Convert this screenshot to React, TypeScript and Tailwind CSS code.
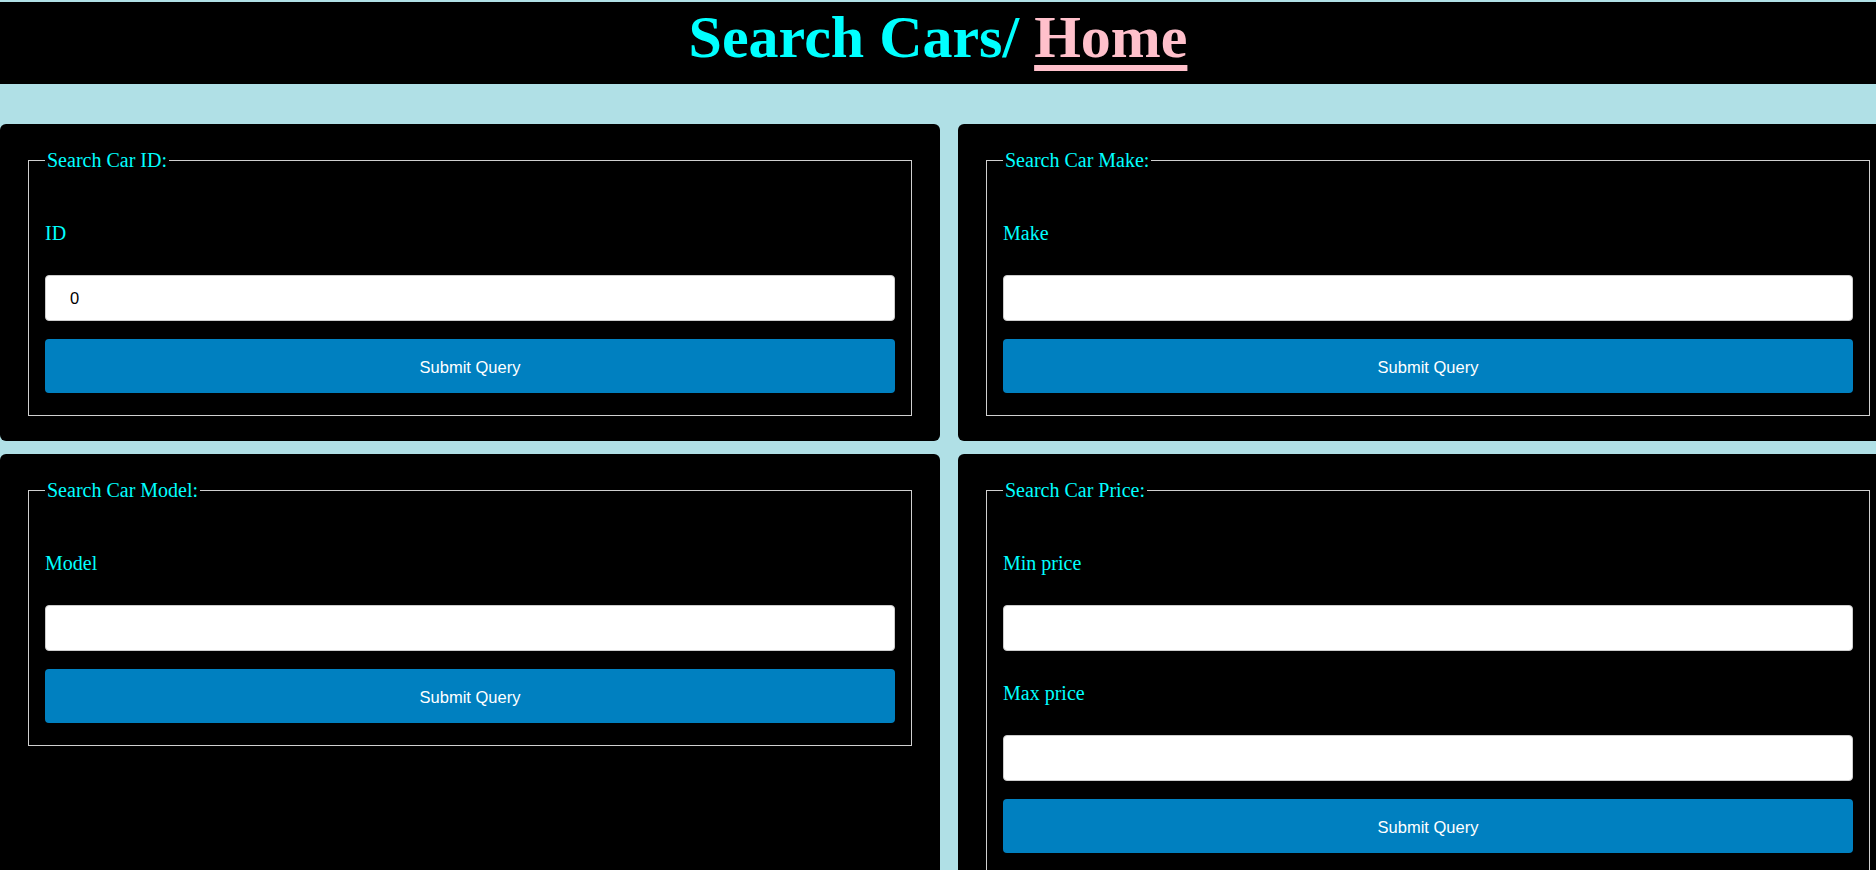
import { useState } from "react";

type Field = { label: string; name: string; type?: string; initial?: string };

type Search = { legend: string; fields: Field[] };

const searches: Search[] = [
  { legend: "Search Car ID:", fields: [{ label: "ID", name: "id", type: "number", initial: "0" }] },
  { legend: "Search Car Make:", fields: [{ label: "Make", name: "make" }] },
  { legend: "Search Car Model:", fields: [{ label: "Model", name: "model" }] },
  {
    legend: "Search Car Price:",
    fields: [
      { label: "Min price", name: "minPrice" },
      { label: "Max price", name: "maxPrice" }
    ]
  }
];

function SearchCard({ search }: { search: Search }) {
  const [values, setValues] = useState<Record<string, string>>(
    Object.fromEntries(search.fields.map((f) => [f.name, f.initial ?? ""]))
  );

  return (
    <form
      onSubmit={(e) => e.preventDefault()}
      className="rounded-md bg-black px-[28px] pt-[25px] pb-[25px]"
    >
      <fieldset className="border border-[#d0d0d0] px-[16px] pb-[22px]">
        <legend className="px-[2px] text-[20px] leading-[22px] text-[#00ffff]">{search.legend}</legend>
        <div className="flex flex-col pt-[20px]">
          {search.fields.map((f) => (
            <div key={f.name} className="flex flex-col">
              <label htmlFor={f.name} className="my-[31px] text-[20px] leading-[22px] text-[#00ffff]">
                {f.label}
              </label>
              <input
                id={f.name}
                name={f.name}
                type={f.type ?? "text"}
                value={values[f.name]}
                onChange={(e) => setValues({ ...values, [f.name]: e.target.value })}
                className="h-[46px] w-full rounded-[4px] border border-[#cccccc] bg-white px-[24px] font-['Liberation_Sans',Arial,sans-serif] text-[16.5px] text-black outline-none"
              />
            </div>
          ))}
          <button
            type="submit"
            className="mt-[18px] h-[54px] w-full rounded-[4px] bg-[#0080c0] pt-[3px] font-['Liberation_Sans',Arial,sans-serif] text-[16.5px] text-white"
          >
            Submit Query
          </button>
        </div>
      </fieldset>
    </form>
  );
}

export default function App() {
  return (
    <div className="min-h-screen overflow-hidden bg-[#b0e0e6] pt-[2px] font-['Liberation_Serif','Times_New_Roman',serif]">
      <header className="h-[82px] bg-black pt-[2px] text-center">
        <h1 className="text-[60px] font-bold leading-[66px] text-[#00ffff]">
          Search Cars/{" "}
          <a
            href="#"
            className="text-[#ffc0cb] underline decoration-[6px] underline-offset-[8px] [text-decoration-skip-ink:none]"
          >
            Home
          </a>
        </h1>
      </header>
      <main className="mt-[40px] grid w-[1898px] grid-cols-[940px_940px] gap-x-[18px] gap-y-[13px]">
        {searches.map((s) => (
          <SearchCard key={s.legend} search={s} />
        ))}
      </main>
    </div>
  );
}
